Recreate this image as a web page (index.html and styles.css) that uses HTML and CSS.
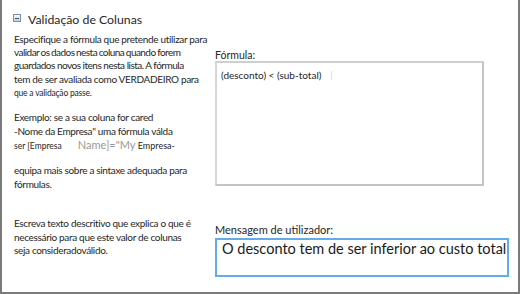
FILE: index.html
```html
<!DOCTYPE html>
<html>
<head>
<meta charset="utf-8">
<link rel="stylesheet" href="styles.css">
</head>
<body>
<div class="frame">
    <div class="section-head">
        <span class="collapse-icon"><span class="minus"></span></span>
        <span class="section-title">Validação de Colunas</span>
    </div>

    <div class="row row-formula">
        <div class="desc">
            <p>Especifique a fórmula que pretende utilizar para<br><span class="tight">validar os dados nesta coluna quando forem</span><br><span class="snug">guardados novos itens nesta lista. A fórmula</span><br>tem de ser avaliada como VERDADEIRO para<br><span class="small">que a validação passe.</span></p>
            <p class="example">Exemplo: se a sua coluna for cared<br>-Nome da Empresa" uma fórmula válda<br><span class="tiny">ser [Empresa</span><span class="gap"></span><span class="ghost">Name]="My</span> <span class="tiny">Empresa-</span></p>
            <p class="more">equipa mais sobre a sintaxe adequada para<br>fórmulas.</p>
        </div>
        <div class="field">
            <label class="field-label">Fórmula:</label>
            <div class="formula-box">(desconto) &lt; (sub-total)<span class="caret"></span></div>
        </div>
    </div>

    <div class="row row-message">
        <div class="desc">
            <p>Escreva texto descritivo que explica o que é<br>necessário para que este valor de colunas<br>seja consideradoválido.</p>
        </div>
        <div class="field">
            <label class="field-label">Mensagem de utilizador:</label>
            <div class="message-box">O desconto tem de ser inferior ao custo total</div>
        </div>
    </div>
</div>
</body>
</html>
```

FILE: styles.css
```css
body { margin: 0; background: #fff; font-family: Lato, "Liberation Sans", sans-serif; color: #262626; }
.frame { box-sizing: border-box; width: 520px; height: 294px; border: solid 2px #7a7a7a; border-top: none; }
.section-head { display: flex; align-items: center; padding: 11px 0 0 11px; height: 17px; }
.collapse-icon { box-sizing: border-box; width: 8px; height: 8px; margin-top: -3px; border: solid 1px #7f8fa8; background: linear-gradient(#f6f8fb, #c3cddc); display: flex; align-items: center; justify-content: center; margin-right: 7px; }
.collapse-icon .minus { width: 4px; height: 1px; background: #42557a; }
.section-title { font-size: 12.3px; white-space: nowrap; }
.row { display: flex; }
.desc { width: 200px; padding-left: 12px; font-size: 10px; line-height: 13.2px; letter-spacing: -0.33px; white-space: nowrap; }
.desc p { margin: 0; }
.desc .tight { letter-spacing: -0.55px; word-spacing: -0.4px; }
.desc .snug { letter-spacing: -0.5px; }
.desc .small { font-size: 8.5px; letter-spacing: -0.2px; }
.row-formula { padding-top: 5px; height: 184px; }
.example { margin-top: 11.4px !important; }
.example .tiny { font-size: 8.5px; letter-spacing: 0; }
.example .tiny + .gap + .ghost + .tiny { font-size: 9px; }
.example .gap { display: inline-block; width: 16px; }
.example .ghost { color: #999; font-size: 11px; letter-spacing: 0; }
.more { margin-top: 11.4px !important; }
.field { display: flex; flex-direction: column; padding-left: 1px; }
.field-label { font-size: 10.5px; line-height: 12px; }
.row-formula .field { padding-top: 16px; }
.formula-box { box-sizing: border-box; width: 269px; height: 125px; border: solid 2px #c4c4c4; border-left-color: #d6d6d6; border-top-color: #cfcfcf; padding: 6px 4px; font-size: 10px; line-height: 12px; white-space: nowrap; }
.caret { display: inline-block; width: 1px; height: 9px; margin-left: 10px; background: #e2e2e2; vertical-align: -1px; }
.row-message .desc { line-height: 13.7px; }
.row-message .field { padding-top: 7px; }
.row-message .field-label { font-size: 11px; }
.message-box { box-sizing: border-box; width: 294px; height: 39px; margin-top: 2px; border: solid 2px #63ace8; padding: 0 5px; font-size: 14.5px; line-height: 17px; color: #1a1a1a; white-space: nowrap; }
```
